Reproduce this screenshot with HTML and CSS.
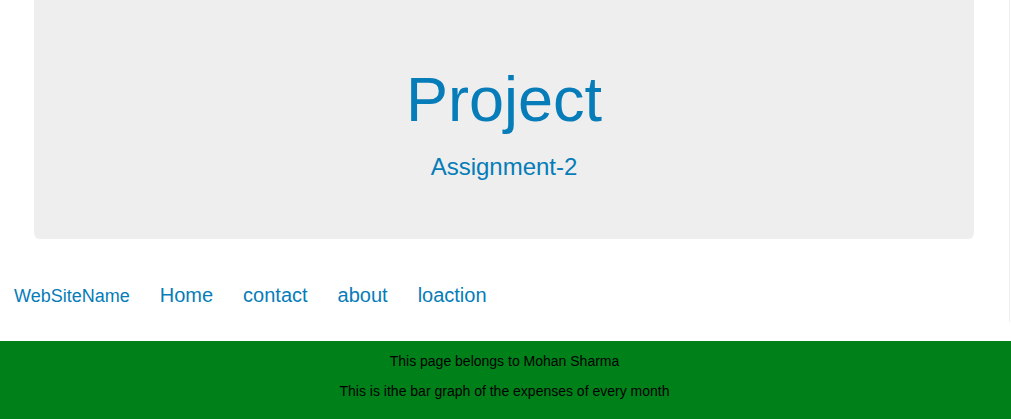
FILE: index.html
```html
<!DOCTYPE html>
<html lang="en">
<head>
<meta charset="utf-8">
<title>Project</title>
<link rel="stylesheet" href="styles.css">
</head>
<body>
<div class="top">
  <div class="container">
    <div class="jumbotron">
      <h1>Project</h1>
      <p>Assignment-2</p>
    </div>
  </div>
  <nav class="navbar">
    <a class="brand" href="#">WebSiteName</a>
    <a class="nav-link" href="#">Home</a>
    <a class="nav-link" href="#">contact</a>
    <a class="nav-link" href="#">about</a>
    <a class="nav-link" href="#">loaction</a>
  </nav>
</div>
<footer class="footer">
  <p>This page belongs to Mohan Sharma</p>
  <p>This is ithe bar graph of the expenses of every month</p>
</footer>
</body>
</html>
```
FILE: styles.css
```css
html, body {
  margin: 0;
  padding: 0;
  background: #fff;
}
body {
  font-family: "Liberation Sans", Arial, sans-serif;
  font-size: 14px;
  line-height: 20px;
  color: #000;
}
.top {
  margin-right: 1px;
  border-right: 1px solid #f0f0f0;
}
.container {
  display: flex;
  justify-content: center;
  padding-right: 2px;
}
.jumbotron {
  width: 939px;
  background: #eeeeee;
  border-radius: 0 0 6px 6px;
  padding: 48px 0 48px 1px;
  margin-bottom: 30px;
  text-align: center;
  color: #067cb8;
}
.jumbotron h1 {
  font-size: 63px;
  line-height: 69px;
  font-weight: 400;
  margin: 17px 0 16px;
}
.jumbotron p {
  font-size: 24px;
  line-height: 34px;
  margin: 0 0 7px;
}
.navbar {
  display: flex;
  align-items: baseline;
  padding: 14px 0 14px;
  margin-bottom: 19px;
  line-height: 24px;
}
.navbar a {
  color: #067cb8;
  text-decoration: none;
  padding: 0 15px;
}
.navbar .brand {
  font-size: 18px;
  padding-left: 14px;
}
.nav-link {
  font-size: 20px;
}
.footer {
  background: #008019;
  text-align: center;
  padding: 10px 2px 10px 0;
}
.footer p {
  margin: 0 0 10px;
}
```
